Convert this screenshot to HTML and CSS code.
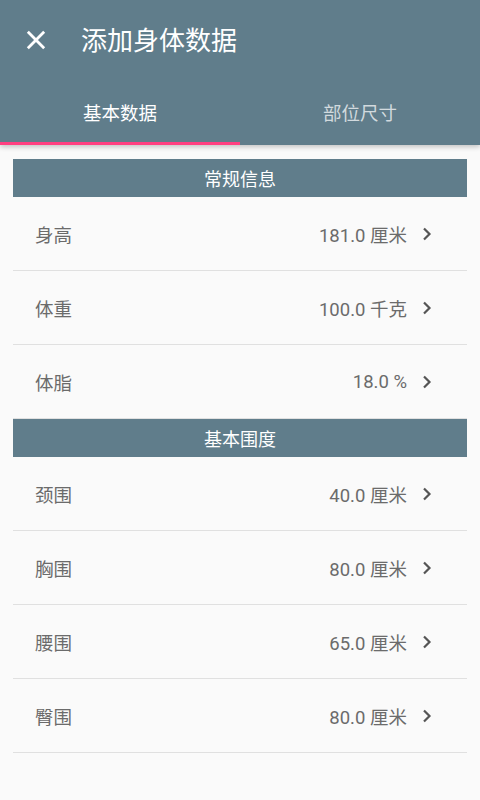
FILE: index.html
```html
<!DOCTYPE html>
<html lang="zh">
<head>
<meta charset="utf-8">
<link rel="stylesheet" href="styles.css">
</head>
<body>
<header class="appbar">
  <div class="toolbar">
    <svg class="close" viewBox="0 0 24 24" width="24" height="24"><path d="M5 5L19 19M19 5L5 19" stroke="#fff" stroke-width="2.4" fill="none"/></svg>
    <h1 class="title">添加身体数据</h1>
  </div>
  <nav class="tabs">
    <div class="tab active">基本数据</div>
    <div class="tab">部位尺寸</div>
  </nav>
</header>
<main class="content">
  <div class="section">常规信息</div>
  <div class="row"><span class="label">身高</span><span class="value">181.0 厘米</span><svg class="chev" viewBox="0 0 24 24"><path d="M9 6.5L14.5 12L9 17.5" stroke="#555" stroke-width="2.2" fill="none"/></svg></div>
  <div class="row"><span class="label">体重</span><span class="value">100.0 千克</span><svg class="chev" viewBox="0 0 24 24"><path d="M9 6.5L14.5 12L9 17.5" stroke="#555" stroke-width="2.2" fill="none"/></svg></div>
  <div class="row"><span class="label">体脂</span><span class="value">18.0 %</span><svg class="chev" viewBox="0 0 24 24"><path d="M9 6.5L14.5 12L9 17.5" stroke="#555" stroke-width="2.2" fill="none"/></svg></div>
  <div class="section">基本围度</div>
  <div class="row"><span class="label">颈围</span><span class="value">40.0 厘米</span><svg class="chev" viewBox="0 0 24 24"><path d="M9 6.5L14.5 12L9 17.5" stroke="#555" stroke-width="2.2" fill="none"/></svg></div>
  <div class="row"><span class="label">胸围</span><span class="value">80.0 厘米</span><svg class="chev" viewBox="0 0 24 24"><path d="M9 6.5L14.5 12L9 17.5" stroke="#555" stroke-width="2.2" fill="none"/></svg></div>
  <div class="row"><span class="label">腰围</span><span class="value">65.0 厘米</span><svg class="chev" viewBox="0 0 24 24"><path d="M9 6.5L14.5 12L9 17.5" stroke="#555" stroke-width="2.2" fill="none"/></svg></div>
  <div class="row"><span class="label">臀围</span><span class="value">80.0 厘米</span><svg class="chev" viewBox="0 0 24 24"><path d="M9 6.5L14.5 12L9 17.5" stroke="#555" stroke-width="2.2" fill="none"/></svg></div>
</main>
</body>
</html>
```
FILE: styles.css
```css
html, body {
  margin: 0;
  padding: 0;
  background: #fafafa;
  font-family: Roboto, "Noto Sans CJK SC", sans-serif;
}
.appbar {
  background: #607d8b;
  color: #fff;
  box-shadow: 0 2px 5px rgba(0,0,0,0.22);
  position: relative;
  z-index: 1;
}
.toolbar {
  height: 80px;
  display: flex;
  align-items: center;
  padding-left: 22px;
}
.close {
  width: 28px;
  height: 28px;
  flex: none;
}
.title {
  margin: 0 0 0 31px;
  font-size: 26px;
  font-weight: 400;
  line-height: 1;
  padding-top: 2px;
}
.tabs {
  display: flex;
  height: 65px;
}
.tab {
  flex: 1;
  display: flex;
  align-items: center;
  justify-content: center;
  font-size: 18.5px;
  color: rgba(255,255,255,0.72);
  border-bottom: 3px solid transparent;
  padding-top: 2px;
  box-sizing: border-box;
}
.tab.active {
  color: #fff;
  border-bottom-color: #ff4081;
}
.content {
  padding: 14px 13px 0;
}
.section {
  height: 38px;
  background: #607d8b;
  color: #fff;
  font-size: 18px;
  display: flex;
  align-items: center;
  justify-content: center;
}
.row {
  height: 73px;
  border-bottom: 1.5px solid #e0e0e0;
  display: flex;
  align-items: center;
  padding: 0 28px 0 22px;
  color: #6b6b6b;
  font-size: 18.5px;
}
.label {
  flex: 1;
}
.value {
  margin-right: 8px;
}
.chev {
  width: 24px;
  height: 24px;
  flex: none;
}
```
